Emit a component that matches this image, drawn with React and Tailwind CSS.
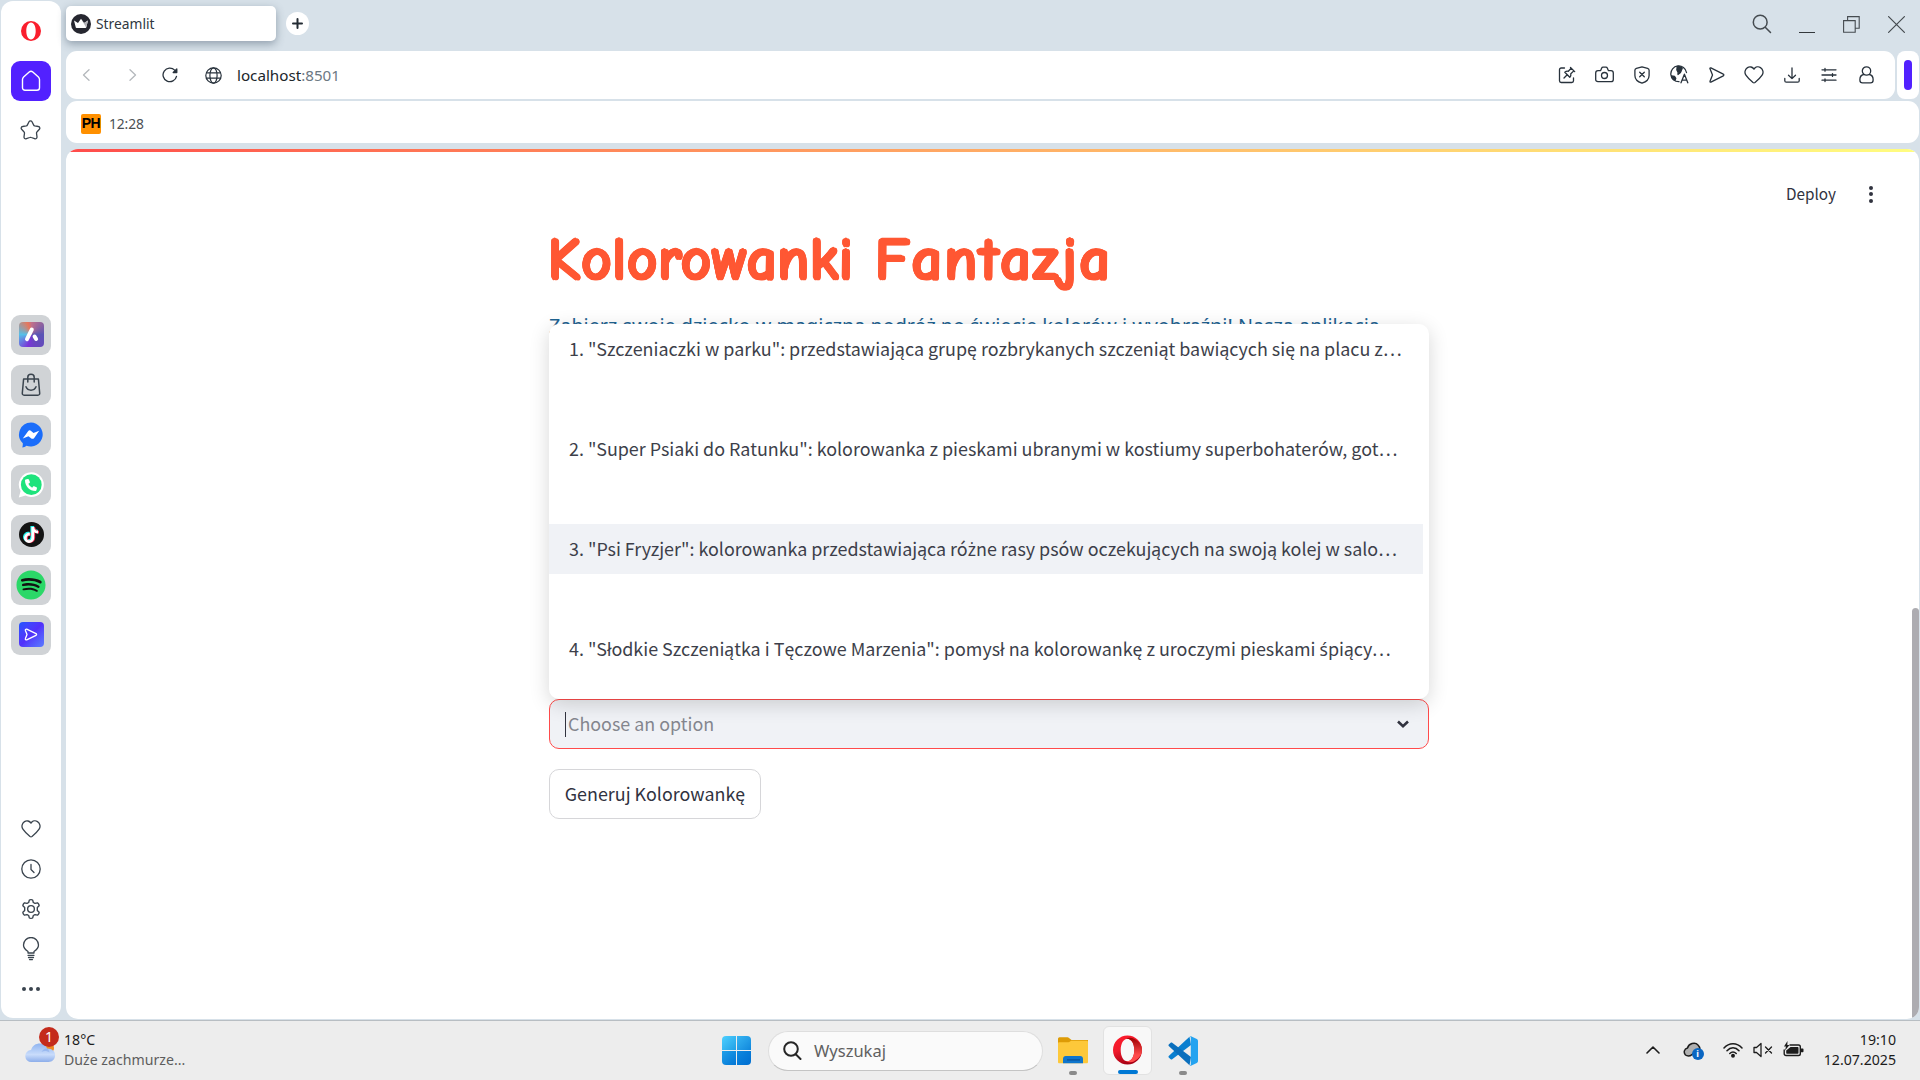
import React from "react";
import { FaSpotify, FaTiktok, FaPhone } from "react-icons/fa6";

const UI = "font-['Noto_Sans','Open_Sans',sans-serif]";
const SOURCE = "font-['Noto_Sans_CJK_SC','Noto_Sans',sans-serif]";

/* Polish letters outside the primary face are set in the secondary one. */
function Pl({ children }) {
  return children.split(/([ąęłżśćźń]+)/).map((part, i) =>
    i % 2 ? (
      <span key={i} className="font-['Noto_Sans',sans-serif] text-[0.98em] leading-none">
        {part}
      </span>
    ) : (
      part
    ),
  );
}

function Icon({ w = 20, h = w, box = `0 0 ${w} ${h}`, className = "", sw = 1.3, children }) {
  return (
    <svg
      width={w}
      height={h}
      viewBox={box}
      fill="none"
      stroke="currentColor"
      strokeWidth={sw}
      strokeLinecap="round"
      strokeLinejoin="round"
      className={`shrink-0 ${className}`}
    >
      {children}
    </svg>
  );
}

const HeartIcon = () => (
  <Icon w={20} h={18}>
    <path d="M10 3.1C8.6.9 5.7.2 3.5 1.6.9 3.2.2 6.6 1.9 9.2c1.6 2.4 4.7 5.4 7.1 7.3.6.4 1.4.4 2 0 2.4-1.9 5.5-4.9 7.1-7.3 1.7-2.6 1-6-1.6-7.6C14.3.2 11.4.9 10 3.1Z" />
  </Icon>
);

function AppTile({ children }) {
  return (
    <div className="flex h-10 w-10 items-center justify-center rounded-[9px] bg-[#d0d3d6]">{children}</div>
  );
}

function Sidebar() {
  return (
    <aside className="ml-px mt-px flex h-[1017px] w-[60px] shrink-0 flex-col items-center rounded-xl bg-white text-[#3a444e]">
      <div className="mt-5 flex h-5 items-center">
        <Icon w={20}>
          <path
            fill="#fa1e2d"
            fillRule="evenodd"
            stroke="none"
            d="M10 0a10 10 0 1 0 0 20A10 10 0 0 0 10 0Zm0 1.500c2.900 0 4.700 3.700 4.700 8.500s-1.800 8.500-4.700 8.500S5.300 14.800 5.300 10 7.100 1.500 10 1.500Z"
          />
        </Icon>
      </div>
      <div className="mt-5 flex h-10 w-10 items-center justify-center rounded-[9px] bg-[#5221ff] text-white">
        <Icon w={20} h={22} sw={1.4}>
          <path d="M1.500 9.500c0-1 .4-1.800 1.100-2.500L8.200 2C9.300 1 10.700 1 11.800 2L17.400 7c.7.7 1.100 1.500 1.100 2.500v8.300c0 1.500-1 2.500-2.500 2.500H4c-1.500 0-2.500-1-2.500-2.500Z" />
        </Icon>
      </div>
      <div className="mt-[19px] mr-px flex h-5 items-center">
        <Icon w={21} h={20}>
          <path d="M9 1.800c.6-1.200 2.400-1.200 3 0l1.700 3.300c.2.4.6.6 1 .7l3.700.7c1.400.2 1.900 1.800 1 2.800l-2.500 2.700c-.3.300-.4.700-.4 1.200l.5 3.600c.2 1.400-1.200 2.400-2.400 1.800l-3.300-1.100c-.5-.2-1.100-.2-1.600 0l-3.300 1.100c-1.200.6-2.600-.4-2.400-1.800l.5-3.600c0-.5-.1-.9-.4-1.200L1.600 9.300c-.9-1-.4-2.600 1-2.800l3.700-.7c.4-.1.8-.3 1-.7Z" />
        </Icon>
      </div>

      <div className="mt-[175px] flex flex-col gap-2.5">
        <AppTile>
          <div className="mb-px flex h-[25px] w-[25px] items-center justify-center rounded-[4px] bg-[conic-gradient(from_0deg,#c2708a,#5a55b5_25%,#6a45c0_45%,#7a35d8_55%,#55c0e8_75%,#e8765a_95%,#c2708a)] text-white">
            <Icon w={17} sw={4}>
              <path d="M8.800 3.500 4 13.200M11.600 10.500l1.500 2.500" />
            </Icon>
          </div>
        </AppTile>
        <AppTile>
          <Icon w={22} h={24} sw={1.5} className="mb-px">
            <path d="M3.600 6h14.800l1.300 14.300c.1 1-.7 1.900-1.700 1.900H4c-1 0-1.800-.9-1.700-1.900Z" />
            <path d="M7.800 9V4.200C7.800 2.400 9 1.200 11 1.200s3.200 1.200 3.200 3V9M6 13.800c1 2.400 2.800 3.400 5 3.400s4-1 5-3.400" />
          </Icon>
        </AppTile>
        <AppTile>
          <Icon w={26} sw={0}>
            <path fill="#1b6dfa" d="M13 .5a12 12 0 1 1-4.600 23.200c-1.300.9-2.500 1.600-4.100 1.800.4-1.300.6-2.700.5-4.300A12 12 0 0 1 13 .5Z" />
            <path fill="#fff" d="m4.800 16.500 5.300-7.300c.8-1 2-1.100 3-.3l2.400 2L21.200 8.700l-5 7.200c-.8 1.100-2.100 1.200-3.200.4l-2.500-2Z" />
          </Icon>
        </AppTile>
        <AppTile>
          <div className="grid h-[26px] w-[26px] place-items-center">
            <Icon w={26} sw={0} className="col-start-1 row-start-1">
              <path fill="#fff" d="M13.300.3A12.400 12.400 0 1 1 7.500 23.600L.8 25.400l1.800-6.400A12.400 12.400 0 0 1 13.300.3Z" />
              <circle cx="13.300" cy="12.700" r="10.400" fill="#1ee37c" />
            </Icon>
            <FaPhone className="col-start-1 row-start-1 h-3 w-3 text-white" />
          </div>
        </AppTile>
        <AppTile>
          <div className="mb-px grid h-[25px] w-[25px] place-items-center rounded-full bg-[#131313]">
            <FaTiktok className="h-4 w-4 text-white [filter:drop-shadow(1px_0.5px_0_#fe2c55)_drop-shadow(-0.7px_-0.3px_0_#25f4ee)]" />
          </div>
        </AppTile>
        <AppTile>
          <div className="grid h-[30px] w-[30px] place-items-center rounded-full bg-[radial-gradient(circle,#121212_65%,transparent_66%)]">
            <FaSpotify className="h-[30px] w-[30px] text-[#2bd868]" />
          </div>
        </AppTile>
        <AppTile>
          <div className="mb-px grid h-[25px] w-[25px] place-items-center rounded-[4px] bg-linear-to-br from-[#1e55ff] via-[#5230fa] to-[#5b7bff] text-white">
            <Icon w={14} h={13}>
              <path d="M2.700 1.200 12 5.600c.8.400.8 1.400 0 1.800l-9.300 4.400c-.9.400-1.700-.5-1.300-1.300L3 6.500 1.400 2.500c-.3-.9.500-1.700 1.300-1.300Z" />
            </Icon>
          </div>
        </AppTile>
      </div>

      <div className="mt-auto mr-px mb-[9px] flex flex-col items-center">
        <div className="flex h-10 items-center">
          <HeartIcon />
        </div>
        <div className="flex h-10 items-center">
          <Icon w={20}>
            <circle cx="10" cy="10" r="9.200" />
            <path d="M10 5.500v5l3 3" />
          </Icon>
        </div>
        <div className="flex h-10 items-center">
          <Icon w={20} box="0.5 0.5 19 19">
            <circle cx="10" cy="10" r="3.200" />
            <path d="M8.400 1.600c.5-.6 2.700-.6 3.200 0l.6 2.200 1.600.9 2.300-.6c.8.300 1.800 2 1.600 2.800L16 8.600v2.800l1.700 1.700c.2.800-.8 2.500-1.600 2.800l-2.300-.6-1.600.9-.6 2.200c-.5.6-2.700.6-3.200 0l-.6-2.200-1.600-.9-2.300.6c-.8-.3-1.800-2-1.600-2.800L4 11.400V8.600L2.300 6.900c-.2-.8.800-2.500 1.600-2.800l2.300.6 1.600-.9Z" />
          </Icon>
        </div>
        <div className="flex h-10 items-center">
          <Icon w={18} h={24}>
            <path d="M6 16v-1.500C3.400 12.800 1.500 11 1.500 8a7.500 7.500 0 0 1 15 0c0 3-1.900 4.800-4.500 6.500V16ZM6 18.300h6M6.500 20.500h5M7.500 22.600h3" />
          </Icon>
        </div>
        <div className="flex h-10 items-center gap-[3px]">
          <span className="h-1 w-1 rounded-full bg-[#3a444e]" />
          <span className="h-1 w-1 rounded-full bg-[#3a444e]" />
          <span className="h-1 w-1 rounded-full bg-[#3a444e]" />
        </div>
      </div>
    </aside>
  );
}

function TabStrip() {
  return (
    <div className="flex h-[50px] items-start">
      <div className="mt-[5px] flex h-[35px] w-[210px] items-center rounded-[5px] bg-white pl-[5px] shadow-[0_3px_8px_rgba(60,80,100,0.45)]">
        <Icon w={20} sw={0}>
          <circle cx="10" cy="10" r="10" fill="#262730" />
          <path fill="#fff" d="M3 6.500 7 9l3-4.200L13 9l4-2.500-1.800 7c-.1.300-.4.500-.7.500h-9c-.3 0-.6-.2-.7-.5Z" />
          <path fill="#b5b5ba" d="m10 4.800 3 4.200 4-2.500-1.800 7Z" />
        </Icon>
        <span className="ml-[5px] pt-px text-[13.8px] text-[#30383f]">Streamlit</span>
      </div>
      <div className="ml-[10px] mt-[11px] flex h-[23px] w-[23px] items-center justify-center rounded-full bg-white text-[#232b33]">
        <Icon w={11} sw={2}>
          <path d="M5.500 1v9M1 5.500h9" />
        </Icon>
      </div>
      <div className="ml-auto flex h-[46px] items-center text-[#454b50]">
        <div className="flex w-[45px] justify-center">
          <Icon w={20} sw={1.5}>
            <circle cx="8.200" cy="8.200" r="6.900" />
            <path d="m13.500 13.500 5 5" />
          </Icon>
        </div>
        <div className="flex w-[45px] justify-center pt-4">
          <span className="h-px w-4 bg-[#33383c]" />
        </div>
        <div className="flex w-[45px] justify-center">
          <Icon w={17} sw={1.1}>
            <path d="M.6 4.600h11.600v11.600H.6zM4.600 4.600V.6h11.600v11.600h-4" strokeLinejoin="miter" />
          </Icon>
        </div>
        <div className="flex w-[45px] justify-center">
          <Icon w={17} sw={1.2}>
            <path d="m.6.6 15.800 15.800M16.400.6.6 16.400" />
          </Icon>
        </div>
      </div>
    </div>
  );
}

const toolIcons = [
  <Icon key="pin" w={18}>
    <path d="M6.500 2H3.200C2.200 2 1.500 2.700 1.500 3.700v11.100c0 1 .7 1.700 1.700 1.700h10.600c1 0 1.700-.7 1.700-1.700v-3" />
    <path d="M12.500 1.500 16.700 5.600M13.200 2.300 10.300 5.300C9 5 7.700 5.500 6.800 6.300l5 5c.8-.9 1.300-2.200 1-3.500l3-2.900M9.200 8.800 6 12" />
  </Icon>,
  <Icon key="camera" w={19} h={17}>
    <path d="M3 4.700h1.800c.6 0 .9-.3 1.100-.8l.7-1.700c.3-.7.8-1 1.500-1h2.800c.7 0 1.200.3 1.500 1l.7 1.700c.2.5.5.8 1.100.8H16c1.400 0 2.300.9 2.300 2.300v6.400c0 1.400-.9 2.300-2.300 2.300H3C1.600 15.700.7 14.800.7 13.400V7c0-1.400.9-2.300 2.300-2.300Z" />
    <circle cx="9.500" cy="9.500" r="3" />
  </Icon>,
  <Icon key="shield" w={16} h={18}>
    <path d="M8 .8 13.600 2.300c.9.300 1.500 1 1.500 1.900v5.300c0 3.800-3.400 6.500-7.100 7.700C4.300 16 .9 13.300.9 9.500V4.200c0-.9.6-1.600 1.500-1.900ZM5.700 6.200l4.600 4.600M10.300 6.200l-4.600 4.600" />
  </Icon>,
  <Icon key="globe" w={19}>
    <path d="M9 16.700A7.900 7.900 0 1 1 16.500 7.500M11 17.800l3.400-8.600 3.400 8.600M12.200 15.200h4.400" />
    <path fill="currentColor" d="M7 1.800c.5 1.800-.8 2.600.2 3.900S8.500 7.500 8 9.500c1.700-.8 3-2 3.200-3.600.2-1.300 1-1.700 1-3C10.500 1.500 8.500 1.300 7 1.800ZM1.500 10.800l3 .7 1.300 1.800-.8 2C3 14.300 1.800 12.700 1.500 10.800Z" />
  </Icon>,
  <Icon key="send" w={16}>
    <path d="M1.900.9 14.300 7.200c.7.300.7 1.300 0 1.600L1.900 15.100c-.6.300-1.200-.3-.9-.9L3.500 8 1 1.800C.7 1.200 1.300.6 1.900.9Z" />
  </Icon>,
  <HeartIcon key="heart" />,
  <Icon key="download" w={16}>
    <path d="M8 1v10.500M4.500 8.200 8 11.600l3.500-3.400M.8 11.500v2.200c0 .9.600 1.500 1.500 1.500h11.400c.9 0 1.500-.6 1.500-1.500v-2.200" />
  </Icon>,
  <Icon key="sliders" w={16}>
    <path d="M1 2.800h14M1 8h14M1 13.200h14M4 1.400v2.800M11.500 6.600v2.800M4 11.800v2.800" />
  </Icon>,
  <Icon key="user" w={15} h={18}>
    <circle cx="7.500" cy="5" r="4.200" />
    <path d="M4.600 8.500C2.500 9 .9 10.800.9 13.300v1c0 1.600 1 2.600 2.600 2.600h8c1.600 0 2.600-1 2.600-2.600v-1c0-2.500-1.600-4.300-3.700-4.800" />
  </Icon>,
];

function AddressBar() {
  return (
    <div className="flex h-12 gap-[2.5px] pr-[0.5px]">
      <div className="flex flex-1 items-center rounded-[11px] bg-white pr-[9px] text-[#28323c]">
        <Icon w={8} h={12} className="ml-[16px] text-[#b4b8bc]">
          <path d="M7 .8 1.500 6 7 11.200" />
        </Icon>
        <Icon w={8} h={12} className="ml-[39px] text-[#b4b8bc]">
          <path d="M1 .8 6.500 6 1 11.200" />
        </Icon>
        <Icon w={16} className="ml-[25px]" sw={1.3}>
          <path d="M14.500 9.300a6.800 6.800 0 1 1-1.800-6.200L14 4.500" />
          <path fill="currentColor" d="M14.800 2v3.500h-3.600Z" />
        </Icon>
        <Icon w={17} className="ml-[27px]" sw={1.2}>
          <circle cx="8.500" cy="8.500" r="7.700" />
          <ellipse cx="8.500" cy="8.500" rx="3.600" ry="7.700" />
          <path d="M1.500 5.800h14M1.500 11.200h14" />
        </Icon>
        <span className="ml-[15px] text-[15.2px] text-[#20262b]">
          localhost<span className="text-[#6c7883]">:8501</span>
        </span>
        <div className="mb-px ml-auto flex">
          {toolIcons.map((icon, i) => (
            <span key={i} className="flex h-6 w-[37.5px] items-center justify-center">
              {icon}
            </span>
          ))}
        </div>
      </div>
      <div className="flex w-[21.5px] items-center justify-center rounded-lg bg-white">
        <span className="h-[30px] w-2 rounded bg-[#5221ff]" />
      </div>
    </div>
  );
}

function BookmarksBar() {
  return (
    <div className="mr-[0.5px] mt-[2px] flex h-[42px] items-center rounded-[11px] bg-white pl-[15px]">
      <span className="mt-[3px] flex h-5 w-5 items-center justify-center rounded-[2px] bg-[#ff9000] font-['Liberation_Sans',sans-serif] text-[14px] font-bold tracking-[-0.5px] text-black">
        PH
      </span>
      <span className="ml-[8px] pt-1 text-[13.8px] tracking-[-0.1px] text-[#4b5055]">12:28</span>
    </div>
  );
}

const options = [
  '1. "Szczeniaczki w parku": przedstawiająca grupę rozbrykanych szczeniąt bawiących się na placu z…',
  "",
  '2. "Super Psiaki do Ratunku": kolorowanka z pieskami ubranymi w kostiumy superbohaterów, got…',
  "",
  '3. "Psi Fryzjer": kolorowanka przedstawiająca różne rasy psów oczekujących na swoją kolej w salo…',
  "",
  '4. "Słodkie Szczeniątka i Tęczowe Marzenia": pomysł na kolorowankę z uroczymi pieskami śpiący…',
];

function Page() {
  return (
    <main
      className={`mt-[6px] flex h-[870px] w-[1853px] flex-col overflow-hidden rounded-xl bg-white ${SOURCE} text-[#31333f]`}
    >
      <div className="h-[3px] shrink-0 bg-linear-to-r from-[#ff4b4b] to-[#fffd80]" />
      <div className="flex min-h-0 flex-1">
        <div className="flex flex-1 flex-col">
          <div className="flex h-[75px] shrink-0 items-center justify-end pt-2 text-[15.3px]">
            <span>Deploy</span>
            <div className="mt-px ml-[33px] mr-[39px] flex flex-col gap-[2.5px]">
              <span className="h-1 w-1 rounded-full bg-[#31333f]" />
              <span className="h-1 w-1 rounded-full bg-[#31333f]" />
              <span className="h-1 w-1 rounded-full bg-[#31333f]" />
            </div>
          </div>
          <section className="ml-[483px] flex w-[880px] flex-col">
            <h1 className="flex h-[84px] items-start pt-px pl-[3px] font-['Comic_Sans_MS','Comic_Neue',Lato,sans-serif] text-[57px] leading-[64px] font-normal italic whitespace-nowrap text-[#ff5733] [text-shadow:2.3px_0_#ff5733,-2.3px_0_#ff5733,0_2px_#ff5733,0_-2px_#ff5733,1.6px_1.5px_#ff5733,-1.6px_1.5px_#ff5733,1.6px_-1.5px_#ff5733,-1.6px_-1.5px_#ff5733,2.1px_0.8px_#ff5733,-2.1px_0.8px_#ff5733,2.1px_-0.8px_#ff5733,-2.1px_-0.8px_#ff5733]">
              <span className="w-[327px] origin-[0%_80%] tracking-[2.5px] [transform:skewX(11.5deg)_scaleX(0.96)]">Kolorowanki</span>
              <span className="origin-[0%_80%] tracking-[4.2px] [transform:skewX(11.5deg)_scaleX(0.985)]">Fantazja</span>
            </h1>
            <p className="h-[12px] pt-px font-['Noto_Sans',sans-serif] text-[19.8px] leading-[28px] whitespace-nowrap text-[#1f6391]">
              Zabierz swoje dziecko w magiczną podróż po świecie kolorów i wyobraźni! Nasza aplikacja
            </p>
            <ul className="z-10 mt-px flex h-[375px] flex-col overflow-hidden rounded-[10px] bg-white pr-[6px] text-[17.92px] text-[#3d3f4a] shadow-[0_5px_20px_rgba(0,0,0,0.16)]">
              {options.map((text, i) => (
                <li
                  key={i}
                  className={`flex h-[50px] shrink-0 items-center pb-0.5 pl-5 leading-6 whitespace-nowrap ${i === 4 ? "bg-[#f0f2f6]" : ""}`}
                >
                  <span>
                    <Pl>{text}</Pl>
                  </span>
                </li>
              ))}
            </ul>
            <div className="flex h-[50px] items-center rounded-[10px] border border-[#ff4b4b] bg-[#f0f2f6] pl-[15px] pr-[18px] text-[17.9px] text-[#84868e]">
              <span className="h-[25px] w-px bg-[#31333f]" />
              <span className="ml-[2px] flex-1 pb-0.5">Choose an option</span>
              <Icon w={14} h={8} sw={2.6} className="text-[#31333f]">
                <path d="m2 1.500 5 4.700 5-4.700" strokeLinecap="butt" strokeLinejoin="miter" />
              </Icon>
            </div>
            <button className="mt-5 flex h-[50px] w-[212px] items-center justify-center rounded-[10px] border border-[#d6d6d9] pb-0.5 text-[17.9px] whitespace-nowrap">
              <span>
                <Pl>Generuj Kolorowankę</Pl>
              </span>
            </button>
          </section>
        </div>
        <div className="flex w-[7px] items-end">
          <span className="h-[411px] w-full rounded-t bg-[#adacb1]" />
        </div>
      </div>
    </main>
  );
}

function Taskbar() {
  return (
    <footer className="grid h-[60px] grid-cols-[709px_1fr_709px] items-center border-t border-[#b8bec3] bg-[#ededed] text-[14.15px] leading-5 text-[#1c1c1c]">
      <div className="flex items-center pb-0.5 pl-[25px]">
        <div className="relative flex h-10 w-[39px] items-center pt-[7px]">
          <Icon w={31} h={20} sw={0}>
            <defs>
              <linearGradient id="cloud" x1="0" y1="0" x2="0" y2="1">
                <stop offset="0" stopColor="#8fb4f0" />
                <stop offset="0.6" stopColor="#c9dcfb" />
                <stop offset="1" stopColor="#8daeea" />
              </linearGradient>
            </defs>
            <circle cx="25" cy="5" r="4" fill="#f08a24" />
            <path fill="url(#cloud)" d="M6.500 19a6 6 0 0 1-.5-12C7.500 2.500 11 .5 14.800.5c3.600 0 6.200 2.100 7.300 5 4.500-.2 8 2.600 8 6.800 0 4-2.900 6.700-6.600 6.700Z" />
            <path fill="#7fa5ea" opacity=".5" d="M22 5.500c-2.500.2-4.500 1.500-5.500 3.500 2.500-1.500 6-1 8 .5-.2-1.500-1-3-2.500-4Z" />
          </Icon>
          <span className="absolute -top-[3px] left-[14px] flex h-5 w-5 items-center justify-center rounded-full bg-[#c42b1c] text-[14px] text-white">
            1
          </span>
        </div>
        <div className="flex flex-col">
          <span>18°C</span>
          <span className="text-[#5d5d5d]">Duże zachmurze...</span>
        </div>
      </div>

      <div className="flex items-center pl-[13px]">
        <div className="grid grid-cols-2 gap-px">
          <span className="h-[14px] w-[14px] rounded-tl-sm bg-linear-to-br from-[#4dd0ff] to-[#1fa0e6]" />
          <span className="h-[14px] w-[14px] rounded-tr-sm bg-linear-to-br from-[#36b5f2] to-[#0f87dc]" />
          <span className="h-[14px] w-[14px] rounded-bl-sm bg-linear-to-br from-[#1fa0ea] to-[#0475d4]" />
          <span className="h-[14px] w-[14px] rounded-br-sm bg-linear-to-br from-[#0f88df] to-[#006dd0]" />
        </div>
        <div className="ml-[17px] flex h-10 w-[275px] items-center rounded-full border border-[#dedede] border-b-[#c4c4c4] bg-[#fafafa] pl-[14px] text-[16.5px] text-[#606060]">
          <Icon w={19} sw={2} className="text-[#262626]">
            <circle cx="8" cy="8" r="6.800" />
            <path d="m13 13.500 4.500 4.500" />
          </Icon>
          <span className="ml-[12px]">Wyszukaj</span>
        </div>
        <div className="ml-[6px] flex h-[48px] w-[48px] flex-col items-center justify-end">
          <Icon w={30} h={27} sw={0} className="mb-[7px]">
            <path fill="#dd9b06" d="M0 2C0 1 .7.3 1.500.3h8c.7 0 1 .2 1.500.7L13.500 3H30v6H0Z" />
            <path fill="#fdc83a" d="M0 6.500c0-.8.500-1.300 1.300-1.300h9.200c.6 0 1-.2 1.500-.6l1.200-.9H28.700c.8 0 1.300.5 1.300 1.300v20c0 .8-.5 1.300-1.300 1.300H1.300C.5 26.300 0 25.800 0 25Z" />
            <path fill="#0f75cc" d="M5 26.300v-4.500c0-1.700 1.100-2.800 2.800-2.800h14.400c1.700 0 2.800 1.100 2.800 2.800v4.500Z" />
            <path fill="#0a4f94" d="M9 22.300h13v1.200H9Z" />
          </Icon>
          <span className="h-1 w-2 rounded-full bg-[#8a8a8a]" />
        </div>
        <div className="ml-[6px] flex h-[49px] w-[49px] flex-col items-center justify-end rounded-md border border-[#e2e2e2] bg-[#f8f8f8]">
          <Icon w={29} h={30} sw={0} className="mb-[5px]">
            <defs>
              <linearGradient id="operaRing" x1="0" y1="0" x2="0.4" y2="1">
                <stop offset="0" stopColor="#ff1b2d" />
                <stop offset="0.5" stopColor="#f01a2b" />
                <stop offset="1" stopColor="#a70014" />
              </linearGradient>
              <linearGradient id="operaEdge" x1="0" y1="0" x2="0" y2="1">
                <stop offset="0" stopColor="#9c0000" />
                <stop offset="0.7" stopColor="#ff4b4b" />
              </linearGradient>
            </defs>
            <path fill="url(#operaRing)" fillRule="evenodd" d="M14.500.5a14.500 14.500 0 1 0 0 29 14.500 14.500 0 0 0 0-29Zm0 3.200c4.200 0 6.800 5 6.800 11.300s-2.600 11.300-6.800 11.300S7.700 21.300 7.700 15s2.600-11.300 6.800-11.300Z" />
            <path fill="url(#operaEdge)" d="M13 3.800c2-1.600 5.500-1.600 8.500.3C26 6.300 29 10.400 29 15s-3 8.700-7.500 10.900c-3 1.900-6.500 1.900-8.500.3 5 .8 8.300-4.600 8.300-11.200S18 3 13 3.800Z" />
          </Icon>
          <span className="h-1 w-5 rounded-full bg-[#0078d4]" />
        </div>
        <div className="ml-[7px] flex h-[48px] w-[48px] flex-col items-center justify-end">
          <Icon w={30} h={30} sw={0} className="mb-[5px]">
            <path fill="#0a7fd0" d="M21.500.8 1 19.800c-.7.6-.7 1.300 0 1.900l1.700 1.500c.4.400 1 .4 1.500 0L23 9Z" />
            <path fill="#0a6fbd" d="M21.500 29.200 1 10.200c-.7-.6-.7-1.300 0-1.900l1.700-1.500c.4-.4 1-.4 1.500 0L23 21Z" />
            <path fill="#24a3f0" d="M21.500.8c.6-.6 1.200-.7 2-.3l5.300 2.500c.8.400 1.200 1 1.200 1.900v20.200c0 .9-.4 1.500-1.200 1.900l-5.300 2.500c-.8.400-1.400.3-2-.3.700.3 1.300-.2 1.300-1V1.800c0-.8-.6-1.300-1.300-1Z" />
          </Icon>
          <span className="h-1 w-2 rounded-full bg-[#8a8a8a]" />
        </div>
      </div>

      <div className="flex items-center justify-end pr-6 pb-0.5">
        <Icon w={14} h={8} sw={1.6}>
          <path d="m1 7 6-6 6 6" />
        </Icon>
        <div className="relative ml-[23px] h-5 w-5 pt-0.5">
          <Icon w={18} h={16} sw={1.5}>
            <path fill="#b0b0b0" d="M2.500 13C.2 10.500 1.200 6.800 4.500 6c1.200-4.500 7.500-6.300 10.500-3 1.500 1.500 2 3 1.800 4.500L7 13.800c-1.500.2-3.300.2-4.500-.8Z" />
          </Icon>
          <span className="absolute top-[8px] left-[9px] flex h-[12px] w-[12px] items-center justify-center rounded-full bg-[#0a66c2] text-[9px] font-bold text-white">
            i
          </span>
        </div>
        <Icon w={20} h={16} sw={1.5} className="ml-5">
          <path d="M1 6C6 .2 14 .2 19 6M4 8.800c3.500-4 8.500-4 12 0M6.800 11.500c2-2 4.400-2 6.400 0" />
          <circle cx="10" cy="13.800" r="1.200" fill="currentColor" />
        </Icon>
        <Icon w={20} h={16} sw={1.3} className="ml-[10px]">
          <path d="M1 5.500v5h2.500L8 14.500v-13L3.500 5.500ZM12.500 5l6 6M18.500 5l-6 6" />
        </Icon>
        <Icon w={21} h={17} sw={1.4} className="ml-[10px]">
          <path d="M7 4h8.500c1 0 1.800.8 1.800 1.800v6.900c0 1-.8 1.800-1.800 1.800H3c-1 0-1.800-.8-1.800-1.800V9" />
          <path fill="currentColor" stroke="none" d="M3.200 9.500 7.500 6h7c.6 0 1 .4 1 1v4.700c0 .6-.4 1-1 1H4.200c-.6 0-1-.4-1-1ZM18 7.500h1.500c.6 0 1 .4 1 1v1.700c0 .6-.4 1-1 1H18ZM4.500 0 1 5.500h2L2 9.500l4.500-5.500H4.300Z" />
        </Icon>
        <div className="ml-[20px] flex flex-col items-end">
          <span>19:10</span>
          <span>12.07.2025</span>
        </div>
      </div>
    </footer>
  );
}

export default function App() {
  return (
    <div className={`flex h-[1080px] w-[1920px] flex-col overflow-hidden bg-[#d7e1e9] ${UI}`}>
      <div className="flex h-[1020px] gap-[5px]">
        <Sidebar />
        <div className="flex w-[1853px] flex-col pt-px">
          <TabStrip />
          <AddressBar />
          <BookmarksBar />
          <Page />
        </div>
      </div>
      <Taskbar />
    </div>
  );
}
